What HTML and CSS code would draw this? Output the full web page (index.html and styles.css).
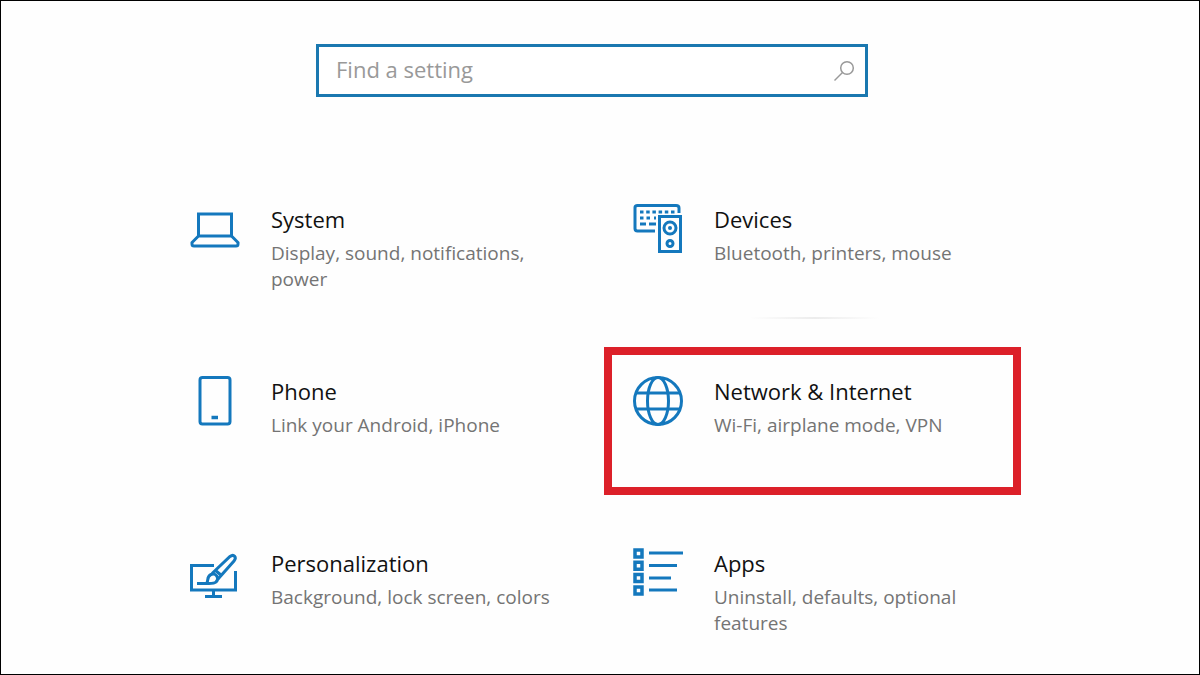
FILE: index.html
```html
<!DOCTYPE html>
<html lang="en">
<head>
<meta charset="utf-8">
<meta name="viewport" content="width=device-width, initial-scale=1">
<title>Settings</title>
<link rel="stylesheet" href="styles.css">
</head>
<body>
<header class="header">
  <form class="search" role="search">
    <input class="search-input" type="text" placeholder="Find a setting" aria-label="Find a setting">
    <button class="search-button" type="button" aria-label="Search">
      <svg viewBox="0 0 22 22" width="22" height="22" fill="none" stroke="currentColor" stroke-width="1.5"><circle cx="14" cy="8" r="6.3"/><path d="M9.5 12.5 1.5 20.5"/></svg>
    </button>
  </form>
</header>
<main class="grid">
  <a class="tile" href="#system">
    <svg class="icon" viewBox="0 0 50 50"><path d="M8.5 10h33v22h-33zM8.500 32 2 38.500V40q0 2 2 2h42q2 0 2-2v-1.500L41.500 32"/></svg>
    <span class="text"><span class="title">System</span><span class="desc">Display, sound, notifications, power</span></span>
  </a>
  <a class="tile" href="#devices">
    <svg class="icon" viewBox="0 0 50 50"><path d="M22 27H4.500Q2 27 2 24.500V3.500Q2 1.500 4.500 1.500H43Q46 1.500 46 4V9"/><path d="M7 8h37" stroke-dasharray="3.500 2.700"/><path d="M7 14h3.500m3 0H17m4 0h2M7 20h6m3 0h7"/><path d="M26.500 12.500h21v35h-21z"/><circle cx="37" cy="24" r="6"/><circle class="fill" cx="37" cy="24" r="2"/><circle cx="37" cy="39.500" r="3"/></svg>
    <span class="text"><span class="title">Devices</span><span class="desc">Bluetooth, printers, mouse</span></span>
  </a>
  <a class="tile" href="#phone">
    <svg class="icon" viewBox="0 0 50 50"><rect x="10" y="1.500" width="30" height="46.500" rx="2.500"/><path d="M21.500 41.500h6.500" stroke-width="3.500"/></svg>
    <span class="text"><span class="title">Phone</span><span class="desc">Link your Android, iPhone</span></span>
  </a>
  <a class="tile tile-marked" href="#network">
    <svg class="icon" viewBox="0 0 50 50"><circle cx="25" cy="25" r="23.500"/><ellipse cx="25" cy="25" rx="10.500" ry="23.500"/><path d="M3 17h44M3 33h44"/></svg>
    <span class="text"><span class="title">Network &amp; Internet</span><span class="desc">Wi-Fi, airplane mode, VPN</span></span>
  </a>
  <a class="tile" href="#personalization">
    <svg class="icon" viewBox="0 0 50 50"><path d="M24 17.500H1.500v24.500h44V23M23.500 42v6M15 48.500h17M7 35.500h10"/><path d="M16 35.500c3-1 0-7 5-9s9 4 5 7.500c-2 2-6 1.500-10 1.500z"/><path d="m22 25.500 18-17c4-3 7 1 4 4.500l-16 18M25.500 22.500l6 5"/></svg>
    <span class="text"><span class="title">Personalization</span><span class="desc">Background, lock screen, colors</span></span>
  </a>
  <a class="tile" href="#apps">
    <svg class="icon" viewBox="0 0 50 50"><path d="M2 2h7v7H2zM2 14.300h7v7H2zM2 26.600h7v7H2zM2 39h7v7H2z" stroke-width="3.500"/><path d="M16 5h34M16 17.500h28M16 30h22M16 42h28"/></svg>
    <span class="text"><span class="title">Apps</span><span class="desc">Uninstall, defaults, optional features</span></span>
  </a>
</main>
</body>
</html>
```
FILE: styles.css
```css
* { box-sizing: border-box; }

body {
  margin: 0;
  min-height: 100vh;
  padding: 43px 16px 0 0;
  border: 1px solid #000;
  background: #fefefe;
  font-family: "Open Sans", "Noto Sans", sans-serif;
}

.header {
  display: flex;
  justify-content: center;
}

.search {
  display: flex;
  align-items: center;
  width: 552px;
  height: 53px;
  padding: 0 10px 0 17px;
  border: 3px solid #1a78b0;
  background: #fff;
}

.search-input {
  flex: 1;
  min-width: 0;
  padding: 0 0 4px;
  border: 0;
  outline: 0;
  background: none;
  color: #222;
  font: inherit;
  font-size: 22px;
  line-height: 28px;
}

.search-input::placeholder { color: #999; opacity: 1; }

.search-button {
  display: flex;
  padding: 0;
  border: 0;
  background: none;
  color: #999;
}

.grid {
  display: grid;
  grid-template-columns: repeat(2, minmax(0, 417px));
  justify-content: center;
  gap: 24px 26px;
  margin-top: 78px;
  padding-right: 2px;
}

.tile {
  position: relative;
  display: flex;
  gap: 31px;
  min-height: 148px;
  padding: 21px 0 21px 21px;
  border: 8px solid transparent;
  color: inherit;
  text-decoration: none;
}

.tile-marked { border-color: #dc2029; }

.tile-marked::before {
  content: "";
  position: absolute;
  top: -38px;
  left: 138px;
  width: 130px;
  height: 2px;
  background: linear-gradient(90deg, transparent, #ececec, transparent);
}

.icon {
  flex: none;
  width: 50px;
  height: 50px;
  fill: none;
  stroke: #1478bd;
  stroke-width: 3;
}

.fill { fill: #1478bd; stroke: none; }

.text {
  display: flex;
  flex-direction: column;
  gap: 5px;
  min-width: 0;
}

.title {
  color: #111;
  font-size: 22px;
  line-height: 31px;
}

.desc {
  color: #747474;
  font-size: 19px;
  line-height: 26px;
}
```
